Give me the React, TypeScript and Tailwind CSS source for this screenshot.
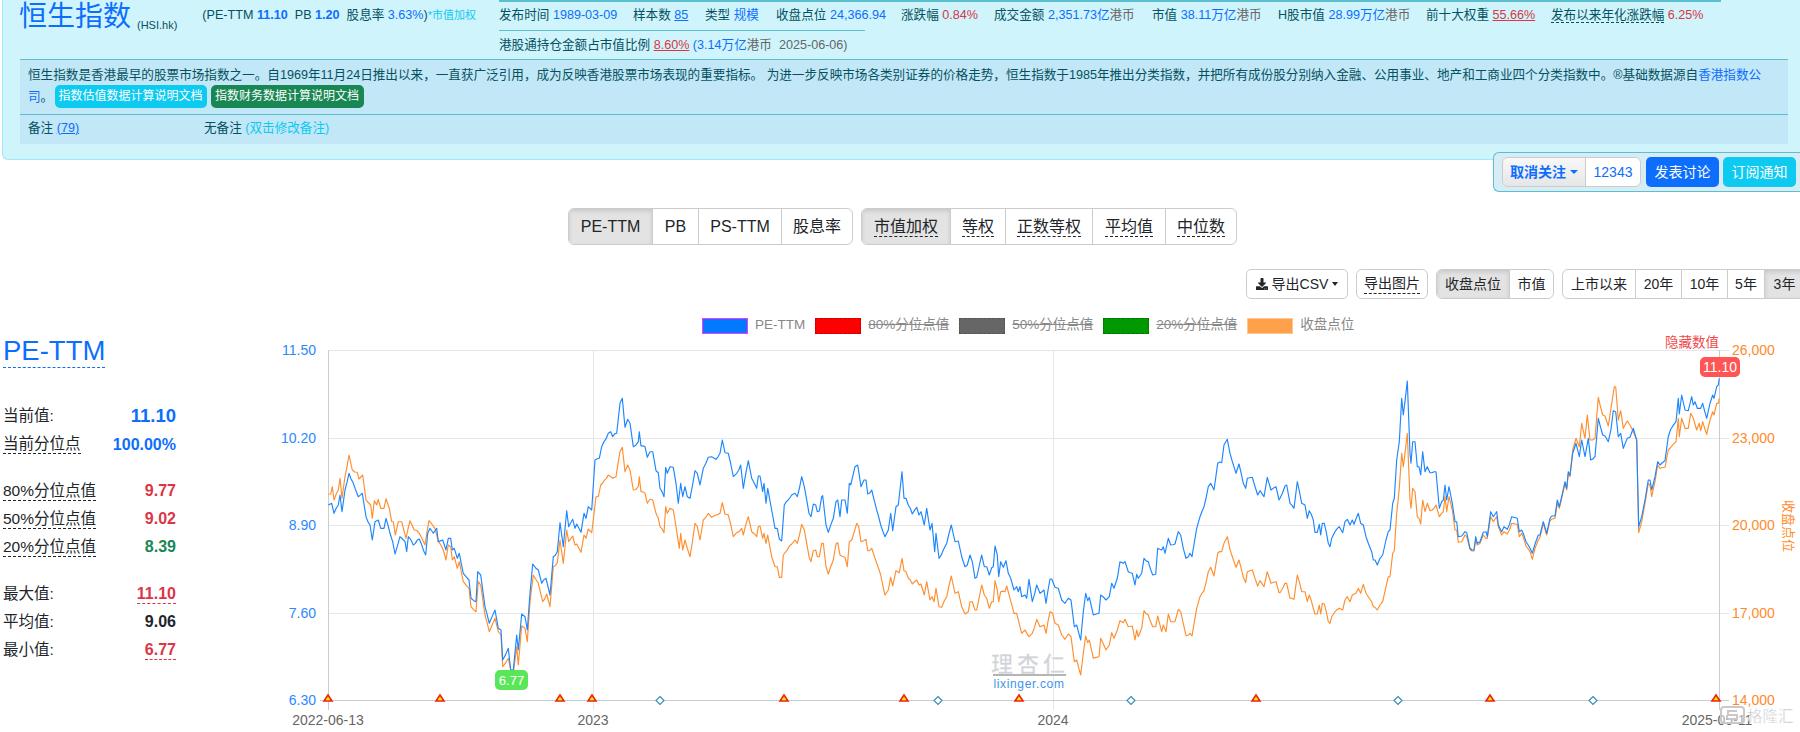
import React from "react";
import { FaDownload } from "react-icons/fa";

const FONT = { fontFamily: '"Liberation Sans","Noto Sans CJK SC",sans-serif' };

const b6 = "205,495 215,490 222,520 235,495 240,465 246,515 255,450 267,400 285,445 295,470 307,460 318,530 330,555 337,600 345,545 355,540 362,565 372,565 378,535 390,580 398,605 405,642 420,590 435,605 440,635 445,590 460,615 478,597 497,645 503,580 510,565 520,580 530,565 535,605 548,600 558,630 565,595 572,595 577,630 583,625 592,655 598,640 610,700 627,720 633,775 648,785 653,695 662,705 675,800 688,850 705,810 715,865 723,870 728,960 745,925 752,990 760,990 770,885 775,930 785,822 795,830 802,870 810,760 818,672 828,685 835,690 845,730 858,715 870,765 880,650 892,635 900,548 910,620 920,512 926,560 938,538 945,565 950,552 963,577 972,520 978,535 985,500 995,510 1005,360 1018,355 1025,320 1045,280 1052,275 1058,290 1070,280 1080,190 1087,175 1095,262 1103,238 1110,250 1120,320 1135,305 1138,275 1143,318 1155,320 1162,352 1170,335 1178,335 1188,392 1195,398 1200,445 1212,470 1217,382 1222,400 1230,380 1240,382 1248,430 1255,490 1262,430 1268,470 1275,440 1282,470 1290,475 1305,392 1312,400 1320,435 1330,385 1345,352 1355,350 1368,358 1380,340 1387,300 1395,338 1405,340 1420,410 1430,400 1442,375 1450,445 1465,362 1475,415 1490,445 1495,408 1500,408";
const o6 = "205,463 212,462 217,440 222,480 235,450 240,415 246,475 255,410 267,345 277,390 292,397 297,417 308,405 318,480 332,495 337,535 343,482 350,495 355,478 362,505 372,505 378,476 388,505 395,545 400,545 406,585 415,545 425,545 438,595 450,542 463,570 478,580 495,615 507,542 525,565 535,605 550,630 558,660 565,615 572,620 577,660 583,650 592,685 598,665 610,725 627,745 633,800 648,815 655,725 662,735 675,825 688,875 705,835 715,875 723,885 728,980 745,955 752,990 760,1000 770,920 775,975 785,858 795,865 802,905 810,785 820,705 835,730 848,785 860,762 870,800 880,680 892,668 900,600 910,670 920,570 926,605 938,588 945,615 950,612 963,637 972,585 978,595 985,567 995,578 1008,470 1015,470 1022,435 1045,405 1058,415 1068,410 1080,335 1087,322 1095,395 1103,375 1110,390 1120,450 1135,440 1138,410 1143,455 1155,460 1162,490 1170,478 1178,480 1188,520 1195,535 1200,560 1212,578 1217,500 1222,520 1230,505 1240,510 1248,560 1258,625 1262,580 1268,630 1275,600 1282,625 1290,650 1305,550 1312,560 1320,600 1330,540 1345,520 1355,532 1368,525 1380,520 1387,488 1395,522 1405,525 1420,590 1430,578 1445,565 1450,585 1465,530 1475,575 1490,590 1495,560 1500,558";
const b7 = "8,455 12,430 18,490 23,445 35,510 45,565 52,565 58,597 65,603 73,495 85,480 95,465 105,460 112,470 125,410 133,440 147,520 153,530 160,492 167,495 172,515 178,513 185,470 188,467 198,555 205,577 220,535 228,485 233,480 240,530 245,480 255,480 262,520 268,430 272,435 285,380 293,375 303,440 312,420 318,420 323,462 335,450 350,510 362,555 375,590 385,570 392,520 398,572 408,500 415,495 426,395 432,475 438,475 445,495 457,522 470,502 477,525 483,515 493,555 500,505 510,570 516,550 524,635 528,580 537,655 550,630 560,610 574,555 585,605 595,603 605,650 615,680 622,675 630,645 637,665 645,715 650,712 665,645 673,680 680,680 688,705 695,683 700,680 705,618 712,645 716,710 722,665 730,682 738,662 745,700 752,715 762,750 770,740 775,755 780,740 785,770 795,765 800,775 807,718 817,785 830,735 840,760 852,750 858,790 870,717 875,717 885,742 895,745 905,780 915,790 925,775 933,780 943,860 950,855 962,900 970,815 977,760 983,782 988,772 1000,825 1017,820 1022,765 1038,780 1048,770 1055,730 1062,745 1072,715 1080,665 1090,670 1095,665 1105,695 1117,700 1125,735 1130,703 1135,715 1145,700 1152,655 1165,665 1178,705 1187,703 1193,625 1205,630 1210,620 1215,640 1225,595 1232,615 1245,612 1255,575 1262,585 1270,625 1278,655 1285,650 1290,640 1296,650 1310,565 1320,530 1332,500 1345,440 1352,430 1362,450 1373,370 1385,368 1392,315 1402,298 1410,340 1428,400 1437,372 1450,430 1457,445 1462,415 1477,412 1493,465 1500,452 1512,470 1522,412 1533,450 1548,440 1557,480";
const o7 = "8,595 12,580 18,610 23,585 35,650 45,680 52,680 58,712 65,712 70,645 80,632 95,612 105,600 112,610 125,553 133,570 147,650 153,665 160,632 167,630 172,650 178,650 185,610 190,610 198,680 205,702 220,660 228,612 233,608 240,645 255,652 262,680 268,605 275,600 290,550 296,560 303,605 318,598 323,632 335,625 350,670 362,705 375,765 385,750 392,712 398,738 408,692 418,698 426,655 432,692 438,695 445,715 457,732 470,720 477,735 483,732 493,765 500,725 510,780 516,770 522,785 528,745 537,800 545,802 560,770 574,708 585,760 595,755 605,800 615,822 625,815 630,785 637,785 645,810 650,810 665,735 673,765 680,775 688,805 695,785 700,785 705,722 712,750 716,785 722,755 735,755 740,738 750,775 762,820 770,820 785,880 795,870 807,890 817,880 830,838 840,860 852,855 858,880 870,815 878,820 885,850 895,855 905,885 915,898 925,882 933,890 943,965 950,960 962,1005 970,940 977,888 983,908 988,900 1000,955 1017,950 1022,895 1038,930 1048,915 1055,878 1062,895 1072,870 1080,842 1090,848 1095,838 1105,860 1117,858 1125,900 1130,870 1135,890 1145,865 1152,812 1165,825 1178,860 1187,860 1193,828 1205,875 1210,855 1218,875 1225,822 1232,845 1245,845 1255,808 1262,815 1270,850 1278,887 1290,880 1296,888 1310,805 1320,770 1332,752 1345,695 1352,682 1362,708 1373,640 1385,635 1392,610 1402,590 1410,628 1428,682 1437,660 1450,712 1457,728 1462,695 1477,690 1493,738 1500,722 1512,740 1522,695 1533,730 1548,725 1557,758";
const b8 = "0,475 15,438 20,435 30,490 42,505 52,425 65,490 75,495 82,535 88,512 100,540 105,577 112,577 118,553 122,585 127,550 133,550 145,610 150,620 155,595 165,575 178,560 188,578 195,545 202,538 210,555 217,540 222,553 235,520 242,550 250,555 258,590 265,610 275,635 280,660 285,660 292,675 300,655 308,645 318,600 325,575 330,570 338,490 343,475 350,360 358,305 365,175 370,225 382,123 390,340 393,370 398,305 405,305 412,380 417,380 422,405 428,335 435,395 442,380 450,398 462,395 468,395 478,505 485,485 490,480 495,435 500,480 507,440 517,490 525,545 530,545 535,590 545,588 555,575 560,578 570,625 582,630 587,590 592,610 600,605 610,577 618,575 622,590 632,515 640,530 650,515 655,555 665,575 672,560 682,568 695,530 712,535 718,575 725,570 738,605 750,625 757,640 765,612 775,585 780,585 790,545 800,580 810,535 815,528 825,528 832,480 838,500 845,470 855,425 860,445 865,395 870,405 878,340 888,310 898,350 905,300 915,350 925,295 932,360 945,350 955,235 968,285 975,288 985,305 993,268 1000,212 1007,215 1015,290 1022,280 1030,325 1042,295 1050,292 1060,265 1070,300 1076,560 1085,530 1095,480 1105,420 1110,420 1115,450 1125,410 1133,365 1140,375 1155,362 1165,290 1172,268 1188,245 1195,175 1198,222 1205,165 1215,210 1225,212 1235,170 1240,195 1245,185 1252,205 1262,205 1268,190 1280,235 1290,190 1298,165 1302,175 1310,140 1315,135 1318,115";
const o8 = "0,758 15,730 20,730 30,775 42,778 52,705 65,755 75,755 82,785 88,765 100,805 105,822 112,822 118,795 122,822 127,790 133,792 145,845 150,850 155,830 165,815 178,805 188,810 195,780 202,770 210,785 217,765 228,760 235,745 242,760 250,733 258,760 265,770 275,785 280,800 285,802 292,810 300,795 308,785 318,740 325,710 330,710 338,640 343,632 350,520 358,445 365,340 370,380 382,280 390,480 393,505 398,445 405,455 412,530 417,535 422,552 428,480 435,515 442,490 450,512 462,505 468,495 478,530 485,520 490,515 495,470 500,515 507,470 517,510 525,570 530,570 535,607 545,605 555,585 560,590 570,628 582,633 587,600 592,615 600,610 610,585 618,595 622,595 632,530 640,545 650,530 655,560 665,585 672,575 682,582 695,550 712,553 718,590 725,580 738,618 750,635 757,658 765,625 775,600 780,592 790,550 800,585 810,542 815,538 825,535 832,490 838,505 845,475 855,430 860,450 865,400 870,410 878,330 888,295 898,320 905,250 915,295 922,225 930,300 945,295 955,172 968,225 975,228 985,258 993,205 1003,140 1007,140 1015,240 1022,212 1030,265 1042,243 1050,255 1060,275 1070,300 1076,578 1085,545 1095,490 1105,430 1110,435 1115,470 1125,425 1133,375 1140,385 1155,382 1165,330 1172,322 1188,305 1195,235 1198,290 1205,235 1215,265 1225,265 1232,220 1240,235 1250,270 1258,250 1262,272 1268,245 1280,283 1290,240 1298,215 1302,225 1310,190 1315,190 1318,175";

function conv(s: string, ox: number): [number, number][] {
  return s.split(" ").map((p) => {
    const [x, y] = p.split(",").map(Number);
    return [x / 3 + ox, y / 3 + 340] as [number, number];
  });
}
// Daily noise shared by both series: one step about every 1.9px of chart width.
function noise(x: number) {
  const v = Math.sin(x * 12.9898) * 43758.5453;
  return (v - Math.floor(v) - 0.5) * 2.4;
}
function toPoints(segs: [number, number][]) {
  const out: string[] = [];
  for (let i = 0; i < segs.length; i++) {
    const [x, y] = segs[i];
    out.push(`${x.toFixed(1)},${y.toFixed(1)}`);
    const nx = segs[i + 1];
    if (!nx) continue;
    const dx = nx[0] - x;
    const n = Math.floor(dx / 1.9);
    for (let k = 1; k < n; k++) {
      const px = x + (dx * k) / n;
      const py = y + ((nx[1] - y) * k) / n + noise(Math.round(px * 2));
      out.push(`${px.toFixed(1)},${py.toFixed(1)}`);
    }
  }
  return out.join(" ");
}
const BLUE = toPoints([...conv(b6, 260), ...conv(b7, 760), ...conv(b8, 1280)]);
const ORANGE = toPoints([...conv(o6, 260), ...conv(o7, 760), ...conv(o8, 1280)]);

const V = ({ children, c = "text-[#0d6efd]" }: { children: React.ReactNode; c?: string }) => <> <span className={c}>{children}</span></>;
const Red = "text-[#dc3545]";

function Stat({ w, children }: { w: number; children: React.ReactNode }) {
  return <span className="shrink-0 whitespace-nowrap leading-[26px]" style={{ width: w }}>{children}</span>;
}

function Seg({ items, h = "h-[37px]", size = "text-[16px]" }: { items: { t: string; w: number; on?: boolean; dash?: boolean }[]; h?: string; size?: string }) {
  return (
    <div className={`flex shrink-0 ${h} ${size} rounded-[6px] border border-[#ccc] text-[#212529] overflow-hidden bg-white`}>
      {items.map((it, i) => (
        <div key={i} style={{ width: it.w }} className={`flex shrink-0 items-center justify-center border-[#ccc] ${i ? "border-l" : ""} ${it.on ? "bg-[#e3e3e3] shadow-[inset_0_2px_4px_rgba(0,0,0,0.13)]" : ""}`}>
          <span className={it.dash ? "border-b border-dashed border-[#212529] leading-[19px]" : ""}>{it.t}</span>
        </div>
      ))}
    </div>
  );
}

function Row({ label, value, vc, dash, under, big, rowH = "h-[28px]" }: { label: string; value: string; vc: string; dash?: boolean; under?: string; big?: string; rowH?: string }) {
  return (
    <div className={`flex ${rowH} items-center justify-between text-[15.5px] text-[#212529]`}>
      <span className={dash ? "border-b border-dashed border-[#212529] leading-[18px]" : "leading-[18px]"}>{label}</span>
      <span className={`font-bold ${big ?? "text-[16px]"} ${vc} ${under ? `border-b border-dashed ${under} leading-[18px]` : "leading-[18px]"}`}>{value}</span>
    </div>
  );
}

function Swatch({ cls, text, ml, strike }: { cls: string; text: string; ml: number; strike?: boolean }) {
  return (
    <div className="flex shrink-0 items-center" style={{ marginLeft: ml }}>
      <span className={`block w-[46px] h-[16px] ${cls}`} />
      <span className={`ml-[7px] text-[13.5px] text-[#888] whitespace-nowrap ${strike ? "line-through" : ""}`}>{text}</span>
    </div>
  );
}

const Tri = ({ x }: { x: number }) => <polygon points={`${x},695 ${x + 4},701 ${x - 4},701`} fill="#ffee00" stroke="#ee2211" strokeWidth="1.6" />;
const Dia = ({ x }: { x: number }) => <polygon points={`${x},696.5 ${x + 4},700.5 ${x},704.5 ${x - 4},700.5`} fill="#fff" stroke="#3d8fb0" strokeWidth="1.2" />;

function Chart() {
  const ys = [350, 438, 525, 613, 700];
  return (
    <svg viewBox="240 334 1560 398" width={1560} height={398} className="block shrink-0" style={FONT}>
      {ys.slice(0, 4).map((y) => <line key={y} x1={328} x2={1729} y1={y + 0.5} y2={y + 0.5} stroke="#e6e6e6" />)}
      <line x1={593.5} x2={593.5} y1={350} y2={710} stroke="#e6e6e6" />
      <line x1={1053.5} x2={1053.5} y1={350} y2={710} stroke="#e6e6e6" />
      <line x1={328.5} x2={328.5} y1={350} y2={710} stroke="#ccc" />
      <line x1={1719.5} x2={1719.5} y1={350} y2={710} stroke="#ccc" />
      <line x1={320} x2={1729} y1={700.5} y2={700.5} stroke="#ccc" />
      {["11.50", "10.20", "8.90", "7.60", "6.30"].map((t, i) => (
        <text key={t} x={316} y={ys[i] + 5} textAnchor="end" fontSize="14" fill="#2a88ff">{t}</text>
      ))}
      {["26,000", "23,000", "20,000", "17,000", "14,000"].map((t, i) => (
        <text key={t} x={1732} y={ys[i] + 5} fontSize="14" fill="#ff8a2b">{t}</text>
      ))}
      <text x={1784} y={526} fontSize="13" fill="#ff8a2b" textAnchor="middle" transform="rotate(90 1784 526)">收盘点位</text>
      <text x={328} y={725} textAnchor="middle" fontSize="14" fill="#666">2022-06-13</text>
      <text x={593} y={725} textAnchor="middle" fontSize="14" fill="#666">2023</text>
      <text x={1053} y={725} textAnchor="middle" fontSize="14" fill="#666">2024</text>
      <text x={1717} y={725} textAnchor="middle" fontSize="14" fill="#666">2025-05-11</text>

      {/* lixinger mark */}
      <text x={1030} y={672} textAnchor="middle" fontSize="22" letterSpacing="4" fontWeight="bold" fill="#cfd3d8" stroke="#fff" strokeWidth="0.5">理杏仁</text>
      <rect x={993} y={674} width={73} height={2} fill="#b5b5b5" />
      <text x={1029} y={688} textAnchor="middle" fontSize="12" letterSpacing="0.65" fill="#3d94e8">lixinger.com</text>

      <polyline points={ORANGE} fill="none" stroke="#ff8e2e" strokeWidth="1.15" strokeLinejoin="round" />
      <polyline points={BLUE} fill="none" stroke="#1c86ff" strokeWidth="1.15" strokeLinejoin="round" />

      {[328, 440, 560, 592, 784, 904, 1019, 1256, 1490, 1716].map((x) => <Tri key={x} x={x} />)}
      {[660, 938, 1131, 1398, 1593].map((x) => <Dia key={x} x={x} />)}

      <rect x={495} y={670} width={33} height={20} rx={5} fill="#50e650" fillOpacity="0.95" />
      <text x={511.5} y={685} textAnchor="middle" fontSize="13" fill="#fff">6.77</text>
      <rect x={1700} y={357} width={40} height={20} rx={5} fill="#ff5555" />
      <text x={1720} y={372} textAnchor="middle" fontSize="14" fill="#fff">11.10</text>
      <text x={1692} y={347} textAnchor="middle" fontSize="13.5" fill="#f04848">隐藏数值</text>

      {/* repost mark over the axis */}
      <g>
        <rect x={1721} y={707} width={23} height={16} rx={3} fill="#fff" fillOpacity="0.45" stroke="#c9c9c9" strokeWidth="2" />
        <path d="M1737 711h-9v4h9v4h-9" fill="none" stroke="#c9c9c9" strokeWidth="2" />
        <text x={1747} y={722} fontSize="15.5" fill="#c4c4c4" stroke="#fff" strokeWidth="0.4">格隆汇</text>
      </g>
    </svg>
  );
}

export default function App() {
  return (
    <div className="w-[1800px] h-[732px] overflow-hidden bg-white text-[12.6px] text-[#055160]" style={FONT}>
      {/* header */}
      <div className="ml-[2px] h-[160px] bg-[#cff4fc] border-b border-l border-[#9eeaf9] rounded-bl-[6px]">
        <div className="flex h-[59px]">
          <div className="w-[496px] shrink-0 flex items-start">
            <span className="ml-[16px] mt-0 text-[28px] leading-[34px] text-[#0d6efd] whitespace-nowrap">恒生指数</span>
            <span className="ml-[6px] mt-[18px] text-[11px] leading-[14px] whitespace-nowrap">(HSI.hk)</span>
            <span className="ml-[25px] leading-[30px] whitespace-nowrap">(PE-TTM <b className="font-bold text-[#0d6efd]">11.10</b>&nbsp; PB <b className="font-bold text-[#0d6efd]">1.20</b>&nbsp; 股息率 <span className="text-[#0d6efd]">3.63%</span>)<span className="text-[#0dcaf0] text-[11px]">*市值加权</span></span>
          </div>
          <div className="flex-1 border-t-2 border-[#5bbfd0] mr-[79px]">
            <div className="flex h-[28px]">
              <Stat w={134}>发布时间<V>1989-03-09</V></Stat>
              <Stat w={72}>样本数<V c="text-[#0d6efd] underline">85</V></Stat>
              <Stat w={71}>类型<V>规模</V></Stat>
              <Stat w={125}>收盘点位<V>24,366.94</V></Stat>
              <Stat w={93}>涨跌幅<V c={Red}>0.84%</V></Stat>
              <Stat w={158}>成交金额<V>2,351.73亿</V><span className="text-[#666]">港币</span></Stat>
              <Stat w={126}>市值<V>38.11万亿</V><span className="text-[#666]">港币</span></Stat>
              <Stat w={148}>H股市值<V>28.99万亿</V><span className="text-[#666]">港币</span></Stat>
              <Stat w={125}>前十大权重<V c={`${Red} underline`}>55.66%</V></Stat>
              <Stat w={168}><span className="border-b border-dashed border-[#055160]">发布以来年化涨跌幅</span><V c={Red}>6.25%</V></Stat>
            </div>
            <div className="w-[366px] border-t border-[#5bbfd0] leading-[28px] whitespace-nowrap">
              港股通持仓金额占市值比例 <span className={`${Red} underline`}>8.60%</span> <span className="text-[#0d6efd]">(3.14万亿</span><span className="text-[#666]">港币&nbsp; 2025-06-06)</span>
            </div>
          </div>
        </div>
        <div className="ml-[17px] mr-[12px] bg-[#c2e7f7]">
          <div className="h-[55px] border-t border-[#5bbfd0] px-[8px] pt-[4px] leading-[22px]">
            <div className="whitespace-nowrap">恒生指数是香港最早的股票市场指数之一。自1969年11月24日推出以来，一直获广泛引用，成为反映香港股票市场表现的重要指标。 为进一步反映市场各类别证券的价格走势，恒生指数于1985年推出分类指数，并把所有成份股分别纳入金融、公用事业、地产和工商业四个分类指数中。®基础数据源自<span className="text-[#0d6efd]">香港指数公</span></div>
            <div className="-mt-[1px] flex items-center whitespace-nowrap">
              <span className="text-[#0d6efd]">司</span><span className="w-[14px]">。</span>
              <span className="h-[23px] w-[152px] rounded-[5px] bg-[#0dcaf0] text-white text-[12px] text-center leading-[23px]">指数估值数据计算说明文档</span>
              <span className="ml-[4px] h-[23px] w-[153px] rounded-[5px] bg-[#198754] text-white text-[12px] text-center leading-[23px]">指数财务数据计算说明文档</span>
            </div>
          </div>
          <div className="flex h-[30px] pb-[3px] border-t border-[#5bbfd0] items-center">
            <span className="ml-[8px] w-[176px]">备注 <span className="text-[#0d6efd] underline">(79)</span></span>
            <span>无备注 <span className="text-[#0dcaf0]">(双击修改备注)</span></span>
          </div>
        </div>
      </div>

      {/* action box */}
      <div className="-mt-[8px] relative ml-auto w-[307px] h-[40px] flex items-center gap-[5px] pl-[8px] bg-[#d6edf6] border border-r-0 border-[#5bbfd0] rounded-l-[6px] text-[14px]">
        <div className="flex shrink-0 h-[30px] rounded-[6px] border border-[#ccc] overflow-hidden">
          <div className="w-[83px] bg-gradient-to-b from-[#f8f8f8] to-[#e6e6e6] flex items-center justify-center font-bold text-[#0d6efd] border-r border-[#ccc]">
            取消关注<span className="ml-[4px] mb-[1px] w-0 h-0 border-x-[4px] border-x-transparent border-t-[4px] border-t-[#0d6efd]" />
          </div>
          <div className="w-[54px] bg-white flex items-center justify-center text-[#0d6efd]">12343</div>
        </div>
        <div className="w-[73px] h-[30px] shrink-0 rounded-[5px] bg-[#0d6efd] text-white flex items-center justify-center">发表讨论</div>
        <div className="ml-[-1px] w-[73px] h-[30px] shrink-0 rounded-[5px] bg-[#0dcaf0] text-white flex items-center justify-center">订阅通知</div>
      </div>

      {/* metric & weight */}
      <div className="mt-[16px] ml-[568px] flex gap-[8px]">
        <Seg items={[{ t: "PE-TTM", w: 83, on: true }, { t: "PB", w: 46 }, { t: "PS-TTM", w: 83 }, { t: "股息率", w: 71 }]} />
        <Seg items={[{ t: "市值加权", w: 88, on: true, dash: true }, { t: "等权", w: 55, dash: true }, { t: "正数等权", w: 87, dash: true }, { t: "平均值", w: 73, dash: true }, { t: "中位数", w: 71, dash: true }]} />
      </div>

      {/* toolbar */}
      <div className="mt-[24px] ml-[1246px] w-max flex text-[14px] text-[#212529] whitespace-nowrap">
        <div className="w-[102px] shrink-0 h-[30px] rounded-[5px] border border-[#ccc] flex items-center justify-center">
          <FaDownload className="text-[12px] mr-[4px]" />导出CSV<span className="ml-[4px] w-0 h-0 border-x-[3.5px] border-x-transparent border-t-[4px] border-t-[#212529]" />
        </div>
        <div className="ml-[8px]"><Seg h="h-[30px]" size="text-[14px]" items={[{ t: "导出图片", w: 70, dash: true }]} /></div>
        <div className="ml-[8px]"><Seg h="h-[30px]" size="text-[14px]" items={[{ t: "收盘点位", w: 72, on: true }, { t: "市值", w: 44 }]} /></div>
        <div className="ml-[8px]"><Seg h="h-[30px]" size="text-[14px]" items={[{ t: "上市以来", w: 72 }, { t: "20年", w: 46 }, { t: "10年", w: 46 }, { t: "5年", w: 37 }, { t: "3年", w: 40, on: true }]} /></div>
      </div>

      {/* legend */}
      <div className="mt-[18px] h-[17px] flex items-center pl-[702px]">
        <Swatch ml={0} cls="bg-[#007bff] border border-[#ff33ff]" text="PE-TTM" />
        <Swatch ml={10} cls="bg-[#ff0000] border border-dashed border-[#cc0000]" text="80%分位点值" strike />
        <Swatch ml={10} cls="bg-[#666666] border border-dashed border-[#555]" text="50%分位点值" strike />
        <Swatch ml={10} cls="bg-[#009900] border border-dashed border-[#007700]" text="20%分位点值" strike />
        <Swatch ml={10} cls="bg-[#ffa04a] border border-[#ffc890]" text="收盘点位" />
      </div>

      {/* main */}
      <div className="flex">
        <div className="w-[240px] shrink-0 pl-[3px] pr-[64px]">
          <div className="mt-[1px] h-[33px] w-fit text-[27.5px] leading-[32px] text-[#0d6efd] border-b border-dashed border-[#0d6efd]">PE-TTM</div>
          <div className="mt-[33px]">
            <Row rowH="h-[29px]" label="当前值:" value="11.10" vc="text-[#0d6efd]" big="text-[18.5px]" />
            <Row rowH="h-[29px]" label="当前分位点" value="100.00%" vc="text-[#0d6efd]" dash />
          </div>
          <div className="mt-[18px]">
            <Row label="80%分位点值" value="9.77" vc="text-[#dc3545]" dash />
            <Row label="50%分位点值" value="9.02" vc="text-[#dc3545]" dash />
            <Row label="20%分位点值" value="8.39" vc="text-[#198754]" dash />
          </div>
          <div className="mt-[19px]">
            <Row label="最大值:" value="11.10" vc="text-[#dc3545]" under="border-[#dc3545]" />
            <Row label="平均值:" value="9.06" vc="text-[#212529]" />
            <Row label="最小值:" value="6.77" vc="text-[#dc3545]" under="border-[#dc3545]" />
          </div>
        </div>
        <Chart />
      </div>
    </div>
  );
}
